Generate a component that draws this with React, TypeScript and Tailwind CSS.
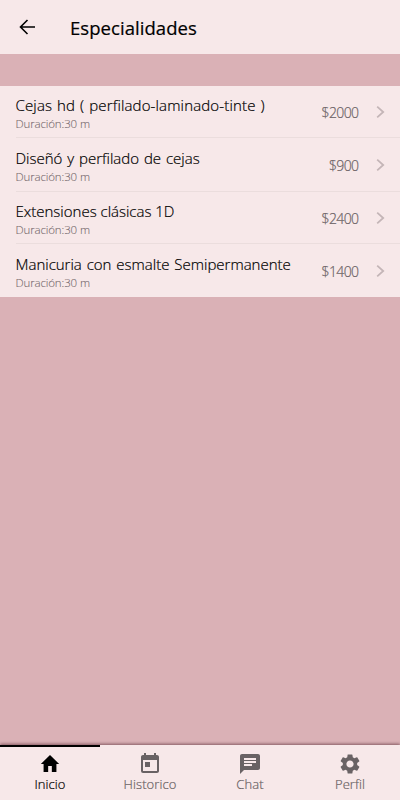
import type { IconType } from "react-icons";
import { MdChat, MdHome, MdSettings, MdToday } from "react-icons/md";
import clsx from "clsx";

type Service = {
  name: string;
  duration: string;
  price: string;
  className: string;
  nameClassName: string;
};

const services: Service[] = [
  {
    name: "Cejas hd ( perfilado-laminado-tinte )",
    duration: "30 m",
    price: "$2000",
    className: "h-[52px]",
    nameClassName: "tracking-[0.15px] [word-spacing:0.9px]"
  },
  {
    name: "Diseñó y perfilado de cejas",
    duration: "30 m",
    price: "$900",
    className: "h-[54px] pt-px",
    nameClassName: "[word-spacing:1px]"
  },
  {
    name: "Extensiones clásicas 1D",
    duration: "30 m",
    price: "$2400",
    className: "h-[52px]",
    nameClassName: "tracking-normal"
  },
  {
    name: "Manicuria con esmalte Semipermanente",
    duration: "30 m",
    price: "$1400",
    className: "h-[53px] pt-px",
    nameClassName: "[word-spacing:1px]"
  }
];

const tabs: { label: string; icon: IconType; iconClassName: string }[] = [
  { label: "Inicio", icon: MdHome, iconClassName: "h-6 w-[22px]" },
  { label: "Historico", icon: MdToday, iconClassName: "h-6 w-6" },
  { label: "Chat", icon: MdChat, iconClassName: "h-6 w-6" },
  { label: "Perfil", icon: MdSettings, iconClassName: "h-6 w-6" }
];

function Header() {
  return (
    <header className="flex h-[54px] shrink-0 items-center bg-[#f7e8e9] pl-[19px]">
      <button type="button" aria-label="Volver">
        <svg className="block h-4 w-4" viewBox="0 0 16 16" fill="none" stroke="#000" strokeWidth="1.6">
          <path d="M8.5 1 1.5 8l7 7M1.5 8H16" />
        </svg>
      </button>
      <h1 className="ml-[35px] pt-px text-[18.5px] leading-6 font-medium tracking-[0.06px] [-webkit-text-stroke:0.2px]">
        Especialidades
      </h1>
    </header>
  );
}

function ServiceRow({ service, last }: { service: Service; last: boolean }) {
  return (
    <li
      className={clsx(
        "ml-[15.5px] flex pr-[15px]",
        !last && "border-b border-[#ebdddd]",
        service.className
      )}
    >
      <div className="flex-1 pt-[9px]">
        <p
          className={clsx(
            "text-[15px] leading-5 whitespace-nowrap [-webkit-text-stroke:0.2px]",
            service.nameClassName
          )}
        >
          {service.name}
        </p>
        <p className="pt-px text-[11.5px] leading-4 tracking-[-0.13px] text-[#75686c] [-webkit-text-stroke:0.1px]">
          Duración:{service.duration}
        </p>
      </div>
      <span className="mt-[17px] text-[14px] leading-5 tracking-[-0.6px] text-[#6b6265] [-webkit-text-stroke:0.2px]">
        {service.price}
      </span>
      <svg
        className="mt-[19.5px] ml-[17.5px] h-3 w-[9px]"
        viewBox="0 0 9 12"
        fill="none"
        stroke="#c4b5b7"
        strokeWidth="1.8"
      >
        <path d="m1.2.7 6 5.3-6 5.3" />
      </svg>
    </li>
  );
}

function TabBar() {
  return (
    <nav className="grid h-[55px] shrink-0 grid-cols-4 bg-[#f7e8e9] shadow-[0_-1px_3px_rgba(70,25,35,0.6)]">
      {tabs.map(({ label, icon: Icon, iconClassName }, index) => (
        <button
          key={label}
          type="button"
          className={clsx(
            "flex flex-col items-center border-t-2 pt-[5px]",
            index === 0 ? "border-black text-black" : "border-transparent text-[#696264]"
          )}
        >
          <Icon className={iconClassName} preserveAspectRatio="none" />
          <span className="-mt-px text-[13px] leading-[18px] tracking-[0.08px] [-webkit-text-stroke:0.2px]">
            {label}
          </span>
        </button>
      ))}
    </nav>
  );
}

export default function App() {
  return (
    <div className="flex h-screen flex-col bg-[#dab1b6] font-['Open_Sans','Noto_Sans',sans-serif] font-light text-black">
      <Header />
      <main className="flex-1 pt-8">
        <ul className="bg-[#f7e8e9]">
          {services.map((service, index) => (
            <ServiceRow key={service.name} service={service} last={index === services.length - 1} />
          ))}
        </ul>
      </main>
      <TabBar />
    </div>
  );
}
